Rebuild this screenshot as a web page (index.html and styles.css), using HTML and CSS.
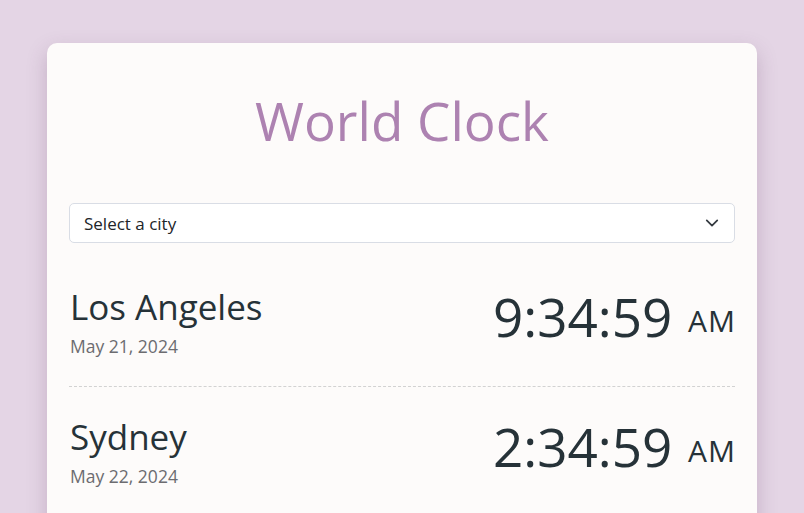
FILE: index.html
```html
<!DOCTYPE html>
<html lang="en">
<head>
<meta charset="utf-8">
<title>World Clock</title>
<link rel="stylesheet" href="styles.css">
</head>
<body>
<main class="card">
  <h1 class="title">World Clock</h1>
  <div class="select">
    <span class="select-label">Select a city</span>
    <svg class="chevron" width="14" height="14" viewBox="0 0 16 16" fill="none" stroke="#343a40" stroke-width="2" stroke-linecap="round" stroke-linejoin="round"><path d="M2 5l6 6 6-6"/></svg>
  </div>
  <section class="city">
    <div class="city-info">
      <div class="city-name">Los Angeles</div>
      <div class="city-date">May 21, 2024</div>
    </div>
    <div class="city-time">9:34:59 <small>AM</small></div>
  </section>
  <section class="city">
    <div class="city-info">
      <div class="city-name">Sydney</div>
      <div class="city-date">May 22, 2024</div>
    </div>
    <div class="city-time">2:34:59 <small>AM</small></div>
  </section>
</main>
</body>
</html>
```
FILE: styles.css
```css
* { box-sizing: border-box; }
html, body { height: 100%; }
body {
  margin: 0;
  background: #e4d5e5;
  font-family: "Open Sans", "Lato", sans-serif;
  color: #263238;
  overflow: hidden;
}
.card {
  width: 710px;
  margin: 43px auto 0;
  background: #fdfbfa;
  border-radius: 10px;
  box-shadow: 0 8px 20px rgba(100, 60, 100, 0.25);
  padding: 42px 22px 40px;
  min-height: 600px;
}
.title {
  margin: 0 0 46px;
  text-align: center;
  font-weight: 400;
  font-size: 53px;
  line-height: 72px;
  color: #ad82b1;
}
.select {
  height: 40px;
  border: 1px solid #d9dde5;
  border-radius: 5px;
  background: #fff;
  display: flex;
  align-items: center;
  justify-content: space-between;
  padding: 0 15px 0 14px;
  font-size: 17px;
  color: #212529;
}
.chevron { display: block; }
.city {
  display: flex;
  justify-content: space-between;
  align-items: center;
  padding: 44px 0 28px 1px;
  border-bottom: 1px dashed #d2d2d2;
}
.city + .city { padding-top: 30px; }
.city-name {
  font-size: 35px;
  line-height: 40px;
  font-weight: 400;
  white-space: nowrap;
}
.city-date {
  margin-top: 7px;
  font-size: 17.5px;
  color: #6c6c70;
  white-space: nowrap;
}
.city-time {
  font-size: 53px;
  font-weight: 400;
  line-height: 60px;
  margin-bottom: 7px;
  white-space: nowrap;
}
.city-time small {
  font-size: 30px;
  letter-spacing: 1px;
  margin-left: 2px;
  margin-right: -1px;
  vertical-align: 5px;
}
```
